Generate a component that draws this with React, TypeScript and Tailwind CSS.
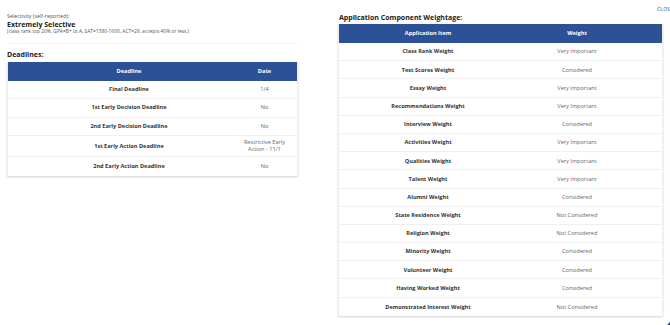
const deadlines: [string, string][] = [
  ["Final Deadline", "1/4"],
  ["1st Early Decision Deadline", "No"],
  ["2nd Early Decision Deadline", "No"],
  ["1st Early Action Deadline", "Restrictive Early Action - 11/1"],
  ["2nd Early Action Deadline", "No"],
];

const weights: [string, string][] = [
  ["Class Rank Weight", "Very Important"],
  ["Test Scores Weight", "Considered"],
  ["Essay Weight", "Very Important"],
  ["Recommendations Weight", "Very Important"],
  ["Interview Weight", "Considered"],
  ["Activities Weight", "Very Important"],
  ["Qualities Weight", "Very Important"],
  ["Talent Weight", "Very Important"],
  ["Alumni Weight", "Considered"],
  ["State Residence Weight", "Not Considered"],
  ["Religion Weight", "Not Considered"],
  ["Minority Weight", "Considered"],
  ["Volunteer Weight", "Considered"],
  ["Having Worked Weight", "Considered"],
  ["Demonstrated Interest Weight", "Not Considered"],
];

export default function App() {
  return (
    <div className="relative w-[670px] h-[325px] overflow-hidden bg-white font-['Open_Sans',sans-serif] flex flex-row">
      {/* left side */}
      <div className="ml-[7px] w-[291px] flex flex-col pt-[13px]">
        <p className="text-[5.3px] leading-[7px] text-[#555]">Selectivity (self-reported):</p>
        <h2 className="text-[7px] leading-[9px] font-bold text-[#222]">Extremely Selective</h2>
        <p className="text-[4.9px] leading-[7px] text-[#555] -mt-[1px]">
          (class rank top 20%, GPA=B+ to A, SAT=1380-1600, ACT=29, accepts 40% or less.)
        </p>
        <div className="border-t border-[#f3f3f3] mt-[8px]" />
        <h3 className="text-[7px] leading-[8px] font-bold text-[#222] mt-[6.5px]">Deadlines:</h3>
        <div className="mt-[3px] shadow-[0_1px_2px_rgba(0,0,0,0.18)] border-x border-[#eee]">
          <div className="grid grid-cols-[224px_1fr] bg-[#2c5196] text-white font-bold text-[5.6px] h-[19px] items-center">
            <div className="text-center pl-[18px]">Deadline</div>
            <div className="text-center px-[8px]">Date</div>
          </div>
          {deadlines.map(([k, v]) => (
            <div
              key={k}
              className="grid grid-cols-[224px_1fr] items-center min-h-[18.5px] py-[3px] border-b border-[#efefef] last:border-b-0"
            >
              <div className="text-center pl-[18px] text-[5.6px] leading-[7px] font-bold text-[#333]">{k}</div>
              <div className="text-center px-[8px] text-[5.6px] leading-[7px] text-[#666]">{v}</div>
            </div>
          ))}
        </div>
      </div>

      {/* right side */}
      <div className="ml-[40px] w-[325px] flex flex-col pt-[12.5px]">
        <h3 className="text-[7px] leading-[9px] font-bold text-[#222] pl-[1px]">Application Component Weightage:</h3>
        <div className="mt-[2px] shadow-[0_1px_2px_rgba(0,0,0,0.18)] border-x border-[#eee]">
          <div className="grid grid-cols-[178px_1fr] bg-[#2c5196] text-white font-bold text-[5.6px] h-[19.5px] items-center">
            <div className="text-center">Application Item</div>
            <div className="text-center pr-[25px]">Weight</div>
          </div>
          {weights.map(([k, v]) => (
            <div
              key={k}
              className="grid grid-cols-[178px_1fr] items-center h-[18.2px] border-b border-[#efefef] last:border-b-0"
            >
              <div className="text-center text-[5.6px] font-bold text-[#333]">{k}</div>
              <div className="text-center pr-[25px] text-[5.6px] text-[#666]">{v}</div>
            </div>
          ))}
        </div>
      </div>

      <button className="absolute left-[657px] top-[6px] text-[5px] font-semibold text-[#5d7fb8] tracking-wide whitespace-nowrap">
        CLOSE
      </button>
      <div className="absolute left-[663px] top-[316px] w-[44px] h-[44px] rounded-full bg-[#1d3e7a]" />
    </div>
  );
}
